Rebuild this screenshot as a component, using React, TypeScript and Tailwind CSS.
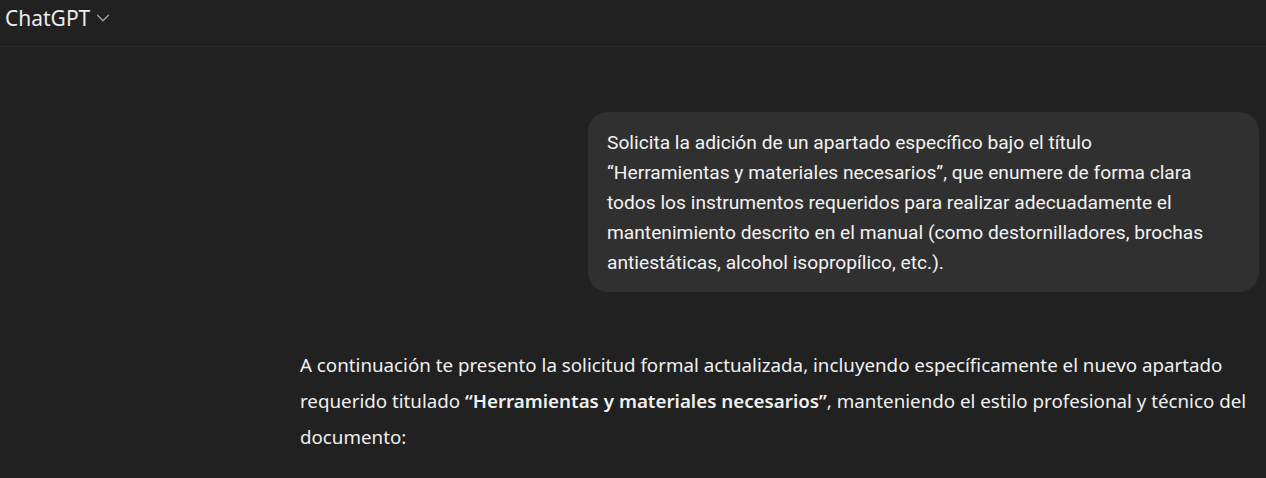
import { ChevronDown } from "lucide-react";

const font = { fontFamily: "'Noto Sans', 'Open Sans', sans-serif" };

export default function App() {
  return (
    <div className="min-h-screen w-full bg-[#212121] text-[#ececec]" style={font}>
      {/* HEADER */}
      <header className="flex h-[47px] items-start border-b border-[#2b2b2b] px-[5px] pt-[2px]">
        <button className="flex items-center gap-[2px] text-[21px] leading-[32px] text-[#ececec]">
          ChatGPT
          <ChevronDown className="h-[22px] w-[22px] text-[#a8a8a8]" strokeWidth={1.3} />
        </button>
      </header>

      {/* USER MESSAGE */}
      <div className="flex justify-end pr-[7px] pt-[65px]">
        <div
          className="w-[671px] rounded-[20px] bg-[#303030] px-[19px] pb-[14px] pt-[16px] text-[19.2px] leading-[30px] text-[#f3f3f3]"
          style={{ fontFamily: "Roboto, 'Noto Sans', sans-serif" }}
        >
          Solicita la adición de un apartado específico bajo el título
          <br />
          “Herramientas y materiales necesarios”, que enumere de forma clara
          <br />
          todos los instrumentos requeridos para realizar adecuadamente el
          <br />
          mantenimiento descrito en el manual (como destornilladores, brochas
          <br />
          antiestáticas, alcohol isopropílico, etc.).
        </div>
      </div>

      {/* ASSISTANT MESSAGE */}
      <div className="pl-[300px] pt-[55px]">
        <p className="w-[960px] text-[18.75px] leading-[36px] text-[#f0f0f0]">
          A continuación te presento la solicitud formal actualizada, incluyendo específicamente el nuevo apartado
          <br />
          requerido titulado <strong className="font-semibold">“Herramientas y materiales necesarios”</strong>, manteniendo
          el estilo profesional y técnico del
          <br />
          documento:
        </p>
      </div>
    </div>
  );
}
